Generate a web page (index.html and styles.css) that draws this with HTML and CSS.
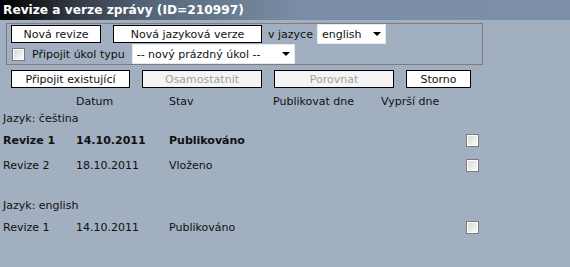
FILE: index.html
```html
<!DOCTYPE html>
<html lang="cs">
<head>
  <meta charset="UTF-8" />
  <title>Revize a verze zprávy</title>
  <link rel="stylesheet" href="styles.css">
</head>
<body>
  <div class="titlebar">Revize a verze zprávy (ID=210997)</div>

  <div class="panel">
    <div class="panel-row">
      <button class="btn btn-new">Nová revize</button>
      <button class="btn btn-lang">Nová jazyková verze</button>
      <span class="lbl">v jazyce</span>
      <span class="sel sel-lang">
        <select>
          <option>english</option>
          <option>čeština</option>
        </select>
      </span>
    </div>
    <div class="panel-row">
      <input type="checkbox" class="chk" id="attachTask" />
      <label for="attachTask" class="lbl lbl-task">Připojit úkol typu</label>
      <span class="sel sel-task">
        <select>
          <option>-- nový prázdný úkol --</option>
        </select>
      </span>
    </div>
  </div>

  <div class="actions">
    <button class="btn btn-attach">Připojit existující</button>
    <button class="btn btn-wide" disabled>Osamostatnit</button>
    <button class="btn btn-wide" disabled>Porovnat</button>
    <button class="btn btn-cancel">Storno</button>
  </div>

  <!-- seznam revizí -->
  <div class="rev-list">
    <div class="rev-row head">
      <span></span><span>Datum</span><span>Stav</span><span>Publikovat dne</span><span>Vyprší dne</span><span></span>
    </div>

    <div class="lang">Jazyk: čeština</div>
    <div class="rev-row current">
      <span>Revize 1</span><span>14.10.2011</span><span>Publikováno</span><span></span><span></span>
      <span><input type="checkbox" class="chk" /></span>
    </div>
    <div class="rev-row">
      <span>Revize 2</span><span>18.10.2011</span><span>Vloženo</span><span></span><span></span>
      <span><input type="checkbox" class="chk" /></span>
    </div>

    <div class="lang lang-gap">Jazyk: english</div>
    <div class="rev-row">
      <span>Revize 1</span><span>14.10.2011</span><span>Publikováno</span><span></span><span></span>
      <span><input type="checkbox" class="chk" /></span>
    </div>
  </div>
</body>
</html>
```

FILE: styles.css
```css
body {
  margin: 0;
  background: #a1afc0;
  color: #111;
  font-family: "DejaVu Sans", Verdana, sans-serif;
  font-size: 11px;
  height: 267px;
  overflow: hidden;
}
.titlebar {
  height: 20px;
  line-height: 20px;
  padding-left: 3px;
  color: #fff;
  font-weight: bold;
  font-size: 12.2px;
  background: linear-gradient(to right, #000 0px, #2a3038 60px, #56667a 150px, #7a8fa6 300px, #7b90a7 570px);
}
.panel {
  margin: 3px 0 0 6px;
  width: 467px;
  padding: 1px 4px 0 4px;
  height: 39px;
  border: 1px solid #7e7e7e;
}
.panel-row {
  display: flex;
  align-items: center;
  height: 18px;
}
.panel-row + .panel-row {
  margin-top: 2px;
}
.btn {
  height: 18px;
  padding: 0;
  background: #fff;
  border: 1px solid #000;
  color: #111;
  font-family: inherit;
  font-size: 11px;
  cursor: pointer;
}
.btn:disabled {
  background: #f4f4f4;
  color: #a0a0a0;
  cursor: default;
}
.btn-new {
  width: 90px;
}
.btn-lang {
  width: 149px;
  margin-left: 12px;
}
.lbl {
  margin: 0 5px 0 6px;
}
.lbl-task {
  margin-right: 8px;
}
.sel {
  position: relative;
  display: inline-block;
  height: 18px;
}
.sel select {
  appearance: none;
  -webkit-appearance: none;
  height: 18px;
  border: none;
  border-radius: 0;
  background: #fff;
  color: #111;
  font-family: inherit;
  font-size: 11px;
  padding: 0 0 0 4px;
  outline: 1px solid #e6e8ec;
}
.sel::after {
  content: "";
  position: absolute;
  right: 4px;
  top: 7px;
  border-left: 4px solid transparent;
  border-right: 4px solid transparent;
  border-top: 4px solid #000;
  pointer-events: none;
}
.sel-lang select {
  width: 67px;
}
.sel-task select {
  width: 161px;
}
.chk {
  appearance: none;
  -webkit-appearance: none;
  width: 13px;
  height: 13px;
  margin: 0;
  border: 1px solid #7a7a7a;
  box-shadow: inset 0 0 0 1px #fff;
  background: linear-gradient(135deg, #d6d6d6, #fdfdfd);
}
.panel-row .chk {
  margin-left: 1px;
  margin-right: 1px;
}
.actions {
  display: flex;
  gap: 12px;
  margin: 5px 0 0 11px;
}
.btn-attach {
  width: 119px;
}
.btn-wide {
  width: 120px;
}
.btn-cancel {
  width: 65px;
}
.rev-list {
  margin-top: 4px;
  padding-left: 3px;
}
.rev-row {
  display: grid;
  grid-template-columns: 73px 93px 104px 108px 85px 13px;
  align-items: center;
  height: 25px;
}
.rev-row.head {
  height: 18px;
}
.rev-row.current {
  font-weight: bold;
}
.rev-row .chk {
  display: block;
}
.lang {
  height: 18px;
  line-height: 18px;
}
.lang-gap {
  margin-top: 19px;
}
```
